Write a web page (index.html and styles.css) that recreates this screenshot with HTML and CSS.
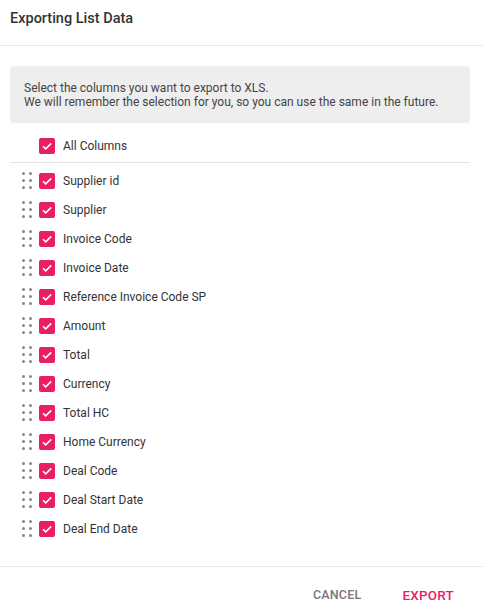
FILE: index.html
```html
<!DOCTYPE html>
<html>
<head>
<meta charset="utf-8">
<link rel="stylesheet" href="styles.css">
</head>
<body>
<div class="dialog">
  <div class="header">Exporting List Data</div>
  <div class="content">
    <div class="info">
      Select the columns you want to export to XLS.<br>
      We will remember the selection for you, so you can use the same in the future.
    </div>
    <div class="all-row">
      <span class="cb"><svg viewBox="0 0 16 16"><path d="M4 8.2l2.7 2.7L12.2 5.4" fill="none" stroke="#fff" stroke-width="1.5"/></svg></span>
      <span class="label">All Columns</span>
    </div>
    <div class="list" id="list"></div>
  </div>
  <div class="footer">
    <button class="btn cancel">CANCEL</button>
    <button class="btn export">EXPORT</button>
  </div>
</div>
<script>
var items = ["Supplier id","Supplier","Invoice Code","Invoice Date","Reference Invoice Code SP","Amount","Total","Currency","Total HC","Home Currency","Deal Code","Deal Start Date","Deal End Date"];
var html = "";
items.forEach(function(t){
  html += '<div class="row"><span class="drag"><i></i><i></i><i></i><i></i><i></i><i></i></span>' +
    '<span class="cb"><svg viewBox="0 0 16 16"><path d="M4 8.2l2.7 2.7L12.2 5.4" fill="none" stroke="#fff" stroke-width="1.5"/></svg></span>' +
    '<span class="label">' + t + '</span></div>';
});
document.getElementById("list").innerHTML = html;
</script>
</body>
</html>
```

FILE: styles.css
```css
html, body {
  margin: 0;
  padding: 0;
  background: #fff;
}
body {
  font-family: Roboto, "Liberation Sans", sans-serif;
  color: #333;
}
.dialog {
  width: 483px;
  height: 614px;
  display: flex;
  flex-direction: column;
}
.header {
  height: 46px;
  box-sizing: border-box;
  padding: 10px 10px 0;
  font-size: 14.5px;
  font-weight: 500;
  color: #333;
  border-bottom: 1px solid #e8e8e8;
  line-height: 18px;
}
.content {
  padding: 20px 13px 0 10px;
  flex: 1;
}
.info {
  background: #eeeeee;
  border-radius: 4px;
  height: 57px;
  box-sizing: border-box;
  padding: 15px 14px 0;
  font-size: 12px;
  line-height: 14px;
  color: #444;
}
.all-row {
  display: flex;
  align-items: center;
  height: 29px;
  margin-top: 8px;
  padding-left: 29px;
  border-bottom: 1px solid #e2e2e2;
  padding-bottom: 2px;
}
.list {
  padding-top: 3px;
}
.row {
  display: flex;
  align-items: center;
  height: 29px;
  padding-left: 12px;
}
.drag {
  display: grid;
  grid-template-columns: 3px 3px;
  grid-template-rows: 3px 3px 3px;
  column-gap: 4px;
  row-gap: 4px;
  width: 10px;
  margin-right: 7px;
}
.drag i {
  display: block;
  width: 3px;
  height: 3px;
  border-radius: 50%;
  background: #888;
}
.cb {
  width: 16px;
  height: 16px;
  background: #e91e63;
  border-radius: 2px;
  display: inline-flex;
  flex-shrink: 0;
}
.cb svg {
  width: 16px;
  height: 16px;
}
.label {
  margin-left: 8px;
  font-size: 12px;
  color: #333;
}
.footer {
  height: 47px;
  border-top: 1px solid #e8e8e8;
  display: flex;
  justify-content: flex-end;
  align-items: center;
  padding-right: 29px;
  gap: 41px;
}
.btn {
  background: none;
  border: none;
  padding: 0;
  font-family: Roboto, "Liberation Sans", sans-serif;
  font-size: 12.5px;
  font-weight: 500;
  letter-spacing: 0.2px;
  margin-top: 8px;
}
.cancel { color: #777; }
.export { color: #e91e63; font-size: 13.5px; }
```
